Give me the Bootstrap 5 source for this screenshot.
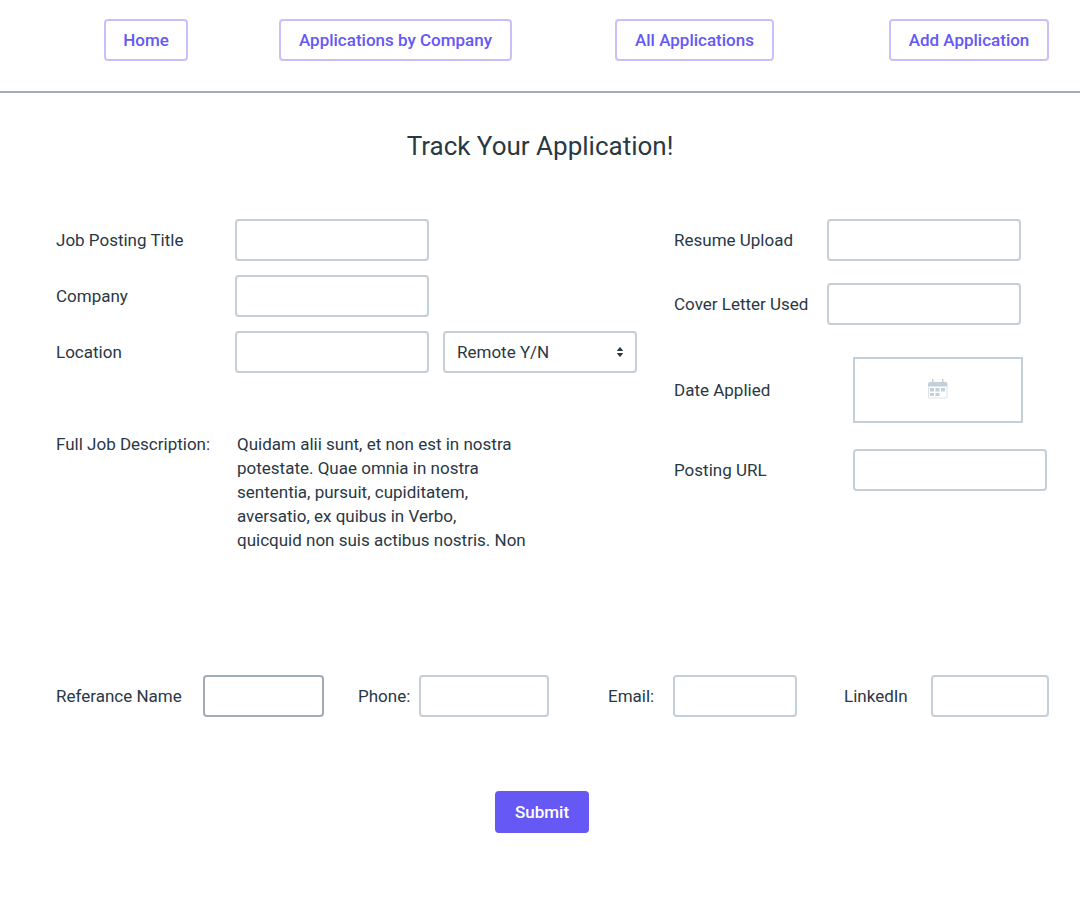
<!DOCTYPE html>
<html lang="en">
<head>
<meta charset="utf-8">
<meta name="viewport" content="width=device-width, initial-scale=1">
<title>Track Your Application!</title>
<link href="https://cdn.jsdelivr.net/npm/bootstrap@5.3.0/dist/css/bootstrap.min.css" rel="stylesheet">
<style>
  :root { --ink: #293845; --line: #c3cfd9; --line-dark: #9eacb9; --accent: #6558f5; }
  body { font-family: Roboto, "Liberation Sans", sans-serif; font-size: 17px; line-height: 24px; color: var(--ink); background: #fff; }
  .top-nav { display: grid; grid-template-columns: 175fr 336fr 274fr 160fr; padding: 19px 31px 30px 104px; border-bottom: 2px solid var(--line-dark); }
  .btn { font-size: 17px; line-height: 24px; font-weight: 500; padding: 7px 16px; border-width: 2px; border-radius: 4px; white-space: nowrap; }
  .btn-nav { --bs-btn-color: var(--accent); --bs-btn-border-color: #c6c1fc; --bs-btn-hover-color: #fff; --bs-btn-hover-bg: var(--accent); }
  .btn-send { --bs-btn-color: #fff; --bs-btn-bg: var(--accent); --bs-btn-border-color: var(--accent); --bs-btn-hover-color: #fff; --bs-btn-hover-bg: #5146d8; width: 94px; }
  .w-home { width: 84px; } .w-company { width: 233px; } .w-all { width: 159px; } .w-add { width: 160px; }
  h1 { font-size: 26px; line-height: 36px; font-weight: 400; padding-top: 35px; margin-bottom: 55px; }
  .form-control, .form-select { height: 42px; border: 2px solid var(--line); border-radius: 4px; padding: 7px 12px; font-size: 17px; line-height: 24px; color: var(--ink); }
  .field-box { width: 194px; flex: none; }
  .form-select { margin-left: 14px; background-image: url("data:image/svg+xml,%3Csvg xmlns='http://www.w3.org/2000/svg' viewBox='0 0 8 12'%3E%3Cpath fill='%23293845' stroke='%23293845' stroke-linejoin='round' d='M4 1.5 6.5 4.5h-5zM4 10.5 1.5 7.5h5z'/%3E%3C/svg%3E"); background-size: 8px 12px; background-position: right 11px center; }
  .form-cols { display: grid; grid-template-columns: 618fr 406fr; padding-left: 56px; }
  .lab-a { width: 179px; flex: none; } .lab-b { width: 153px; flex: none; }
  .stack-a { display: flex; flex-direction: column; gap: 14px; }
  .about { padding-top: 45px; }
  .about-text { width: 300px; margin: 0 0 0 2px; }
  .row-cover { margin-top: 22px; } .row-date { margin-top: 32px; } .row-url { margin-top: 26px; }
  .date-box { width: 170px; height: 66px; background: #fff; border: 2px solid var(--line); padding: 0; }
  .refs { display: grid; grid-template-columns: 302fr 250fr 236fr 205fr; padding: 123px 31px 0 56px; }
  .lab-name { width: 147px; } .lab-phone { width: 61px; } .lab-mail { width: 65px; } .lab-link { width: 87px; }
  .refs label, .refs input { flex: none; }
  .in-name { width: 121px; border-color: var(--line-dark); } .in-phone { width: 130px; } .in-mail { width: 124px; } .in-link { width: 118px; }
  .send { padding: 74px 0 48px 4px; }
</style>
</head>
<body>
<nav class="top-nav" aria-label="Main">
  <div><a class="btn btn-nav w-home" href="#">Home</a></div>
  <div><a class="btn btn-nav w-company" href="#">Applications by Company</a></div>
  <div><a class="btn btn-nav w-all" href="#">All Applications</a></div>
  <div><a class="btn btn-nav w-add" href="#">Add Application</a></div>
</nav>
<main>
  <h1 class="text-center">Track Your Application!</h1>
  <form>
    <div class="form-cols">
      <div class="stack-a">
        <div class="d-flex align-items-center"><label class="lab-a" for="title">Job Posting Title</label><input class="form-control field-box" id="title" type="text"></div>
        <div class="d-flex align-items-center"><label class="lab-a" for="company">Company</label><input class="form-control field-box" id="company" type="text"></div>
        <div class="d-flex align-items-center"><label class="lab-a" for="location">Location</label><input class="form-control field-box" id="location" type="text">
          <select class="form-select field-box" id="remote" aria-label="Remote"><option>Remote Y/N</option><option>Yes</option><option>No</option></select></div>
        <div class="d-flex about"><div class="lab-a text-nowrap">Full Job Description:</div><p class="about-text">Quidam alii sunt, et non est in nostra<br>potestate. Quae omnia in nostra<br>sententia, pursuit, cupiditatem,<br>aversatio, ex quibus in Verbo,<br>quicquid non suis actibus nostris. Non</p></div>
      </div>
      <div>
        <div class="d-flex align-items-center"><label class="lab-b" for="resume">Resume Upload</label><input class="form-control field-box" id="resume" type="text"></div>
        <div class="d-flex align-items-center row-cover"><label class="lab-b" for="cover">Cover Letter Used</label><input class="form-control field-box" id="cover" type="text"></div>
        <div class="d-flex align-items-center row-date"><label class="lab-a" for="date">Date Applied</label>
          <button class="date-box d-flex align-items-center justify-content-center" id="date" type="button" aria-label="Date Applied">
            <svg width="22" height="22" viewBox="0 0 22 22" fill="#c3cfd9" aria-hidden="true"><path d="M5 0h1.500v3H5zM15 0h1.500v3H15zM1 5a2 2 0 0 1 2-2h15.500a2 2 0 0 1 2 2v2.500H1zM3 9h4v3.500H3zM8.500 9h4v3.500h-4zM14 9h4v3.500h-4zM3 14h4v3H3zM8.500 14h4v3h-4z"/><path d="M1.500 7.500v10.500a1 1 0 0 0 1 1h16.500a1 1 0 0 0 1-1V7.500" fill="none" stroke="#dbe3e9"/></svg>
          </button></div>
        <div class="d-flex align-items-center row-url"><label class="lab-a" for="url">Posting URL</label><input class="form-control field-box" id="url" type="url"></div>
      </div>
    </div>
    <div class="refs">
      <div class="d-flex align-items-center"><label class="lab-name" for="ref">Referance Name</label><input class="form-control in-name" id="ref" type="text"></div>
      <div class="d-flex align-items-center"><label class="lab-phone" for="phone">Phone:</label><input class="form-control in-phone" id="phone" type="tel"></div>
      <div class="d-flex align-items-center"><label class="lab-mail" for="mail">Email:</label><input class="form-control in-mail" id="mail" type="email"></div>
      <div class="d-flex align-items-center"><label class="lab-link" for="linkedin">LinkedIn</label><input class="form-control in-link" id="linkedin" type="text"></div>
    </div>
    <div class="send text-center"><button class="btn btn-send" type="submit">Submit</button></div>
  </form>
</main>
<script src="https://cdn.jsdelivr.net/npm/bootstrap@5.3.0/dist/js/bootstrap.bundle.min.js"></script>
</body>
</html>
